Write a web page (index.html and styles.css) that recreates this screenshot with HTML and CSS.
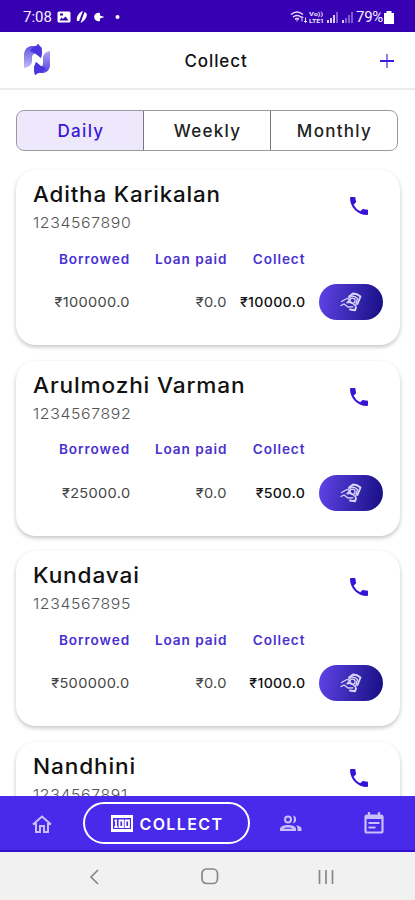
FILE: index.html
```html
<!DOCTYPE html>
<html lang="en">
<head>
<meta charset="utf-8">
<title>Collect</title>
<link rel="stylesheet" href="styles.css">
</head>
<body>
<svg class="defs" width="0" height="0">
  <symbol id="phone" viewBox="0 0 24 24"><path d="M20 15.5c-1.25 0-2.45-.2-3.57-.57a1 1 0 0 0-1.02.24l-2.2 2.2a15.05 15.05 0 0 1-6.59-6.58l2.2-2.21a1 1 0 0 0 .25-1.02A11.4 11.4 0 0 1 8.5 4a1 1 0 0 0-1-1H4a1 1 0 0 0-1 1c0 9.39 7.61 17 17 17a1 1 0 0 0 1-1v-3.5a1 1 0 0 0-1-1z"/></symbol>
  <symbol id="cash" viewBox="0 0 22 20"><g fill="none" stroke="#dcd8fa" stroke-width="1.3" stroke-linecap="round" stroke-linejoin="round"><path stroke-width="1.8" d="M9 4.500 13 1.500q4 0 7.500 3L17.500 12"/><path d="M8 6.500 12 4q3 0 5.500 2.500L15.500 14"/><circle cx="12.500" cy="8.800" r="2.600"/><path d="M1.500 9.500 7 6.500M7 6.500l3 1-3 3.300 4-.8 4 3.500M1 13.500l3-1.500 4 3 5-.2"/><path stroke-width="2" d="M10 17.500l5 .8 1-3"/></g></symbol>
</svg>
<div class="screen">
  <div class="status">
    <span class="time">7:08</span>
    <svg class="notes" width="68" height="16" viewBox="0 0 68 16" fill="#fff"><path fill-rule="evenodd" d="M2 2.5h10q1.500 0 1.500 1.500v8q0 1.500-1.500 1.500H2Q.5 13.500.5 12V4Q.5 2.500 2 2.500zM2.500 11.500h9L8.500 7.500 6 10 4.500 8.500zM3 4.500v2h3v-2z"/><path d="M20 12c-1-4 2-9 6-10l-4 10zM23.500 14l4-11c5 1 1 9-4 11z"/><path d="M43 4a4.300 4.300 0 1 0 0 8V9.500l4.500-1.500L43 6.500z"/><circle cx="60.500" cy="8" r="2"/></svg>
    <svg class="signals" width="66" height="16" viewBox="0 0 66 16" fill="none" stroke="#e8e0ff"><path stroke-width="1.500" d="M1 5.500q6-5 12 0M3 8q4-3 8 0M5 10.300q2-1.500 4 0"/><path d="M7 10.500v2M12 7.500v5m-1.500-3.500L12 7.500 13.500 9M15.500 8.500v5m-1.500-1.500 1.500 1.500 1.500-1.500"/><text x="19" y="7" class="tiny" textLength="14" lengthAdjust="spacingAndGlyphs">Vo))</text><text x="19" y="14" class="tiny" textLength="15" lengthAdjust="spacingAndGlyphs">LTE1</text><path stroke-width="1.800" d="M38 14v-3M41 14V9M44 14V6M53 14v-3"/><path stroke-width="1.800" opacity=".45" d="M47 14V3M56 14V9M59 14V6M62 14V3"/></svg>
    <span class="percent">79%</span>
    <svg class="battery" width="10" height="13" viewBox="0 0 10 13" fill="#fff"><path d="M2.500 0h5v2H10v11H0V2h2.500z"/></svg>
  </div>
  <header class="topbar">
    <svg class="logo" width="30" height="34" viewBox="0 0 30 34">
      <defs><linearGradient id="la" x2="0" y2="1"><stop stop-color="#5548dc"/><stop offset="1" stop-color="#c4bcf7"/></linearGradient><linearGradient id="lb" x2="0" y2="1"><stop stop-color="#b0a7f4"/><stop offset="1" stop-color="#4b36dc"/></linearGradient></defs>
      <path fill="url(#la)" d="M2 25V11Q3 4 9 3h6l1-2 4 4v4l-1 6-5-4q-3-1-4 3v5q-1 5-8 6z"/>
      <path fill="url(#lb)" d="M28 8v15q-1 6-7 7h-5l-3 2-1-4v-3l2-6 4 4q3 1 3-3v-6q1-5 7-6z"/>
      <path fill="#4935dc" d="m14 3 2-2 3 4 1 5-1 5-5-4-6-3q2-4 6-5zM12 24l2-5 5 4 5 2q-2 4-8 5l-3 2z"/>
    </svg>
    <h1>Collect</h1>
    <svg class="plus" width="14" height="14" viewBox="0 0 14 14"><path d="M7 0v14" stroke="#8c7eec" stroke-width="2"/><path d="M0 7h14" stroke="#3a1ae0" stroke-width="2"/></svg>
  </header>
  <main>
    <nav class="tabs"><span class="tab active">Daily</span><span class="tab">Weekly</span><span class="tab">Monthly</span></nav>
    <section class="card">
      <h2 class="long">Aditha Karikalan</h2><p>1234567890</p><svg class="phone"><use href="#phone"/></svg>
      <div class="grid"><b>Borrowed</b><b>Loan paid</b><b>Collect</b><i></i><span>₹100000.0</span><span>₹0.0</span><span class="due">₹10000.0</span><button><svg width="22" height="20"><use href="#cash"/></svg></button></div>
    </section>
    <section class="card">
      <h2>Arulmozhi Varman</h2><p>1234567892</p><svg class="phone"><use href="#phone"/></svg>
      <div class="grid"><b>Borrowed</b><b>Loan paid</b><b>Collect</b><i></i><span>₹25000.0</span><span>₹0.0</span><span class="due">₹500.0</span><button><svg width="22" height="20"><use href="#cash"/></svg></button></div>
    </section>
    <section class="card">
      <h2>Kundavai</h2><p>1234567895</p><svg class="phone"><use href="#phone"/></svg>
      <div class="grid"><b>Borrowed</b><b>Loan paid</b><b>Collect</b><i></i><span>₹500000.0</span><span>₹0.0</span><span class="due">₹1000.0</span><button><svg width="22" height="20"><use href="#cash"/></svg></button></div>
    </section>
    <section class="card">
      <h2>Nandhini</h2><p>1234567891</p><svg class="phone"><use href="#phone"/></svg>
    </section>
  </main>
  <nav class="bottom">
    <svg class="home" width="20" height="18" viewBox="0 0 20 18" fill="none" stroke="#c9c0fb" stroke-width="2"><path d="M1 9.500 10 1.500l9 8M4 8v9h4v-6h4v6h4V8"/></svg>
    <div class="pill"><svg width="22" height="17" viewBox="0 0 22 17"><path fill="#fff" fill-rule="evenodd" d="M0 0h22v17H0zM2 3v11h18V3z"/><path fill="none" stroke="#fff" stroke-width="1.800" d="M3.500 5.500H5V12M3.300 12h3.400M8.500 5.500H12V12H8.500zM14.500 5.500H18V12h-3.500z"/></svg><span>COLLECT</span></div>
    <svg class="people" width="22" height="17" viewBox="0 0 22 17" fill="#c9c0fb"><path fill-rule="evenodd" d="M8 .5a4 4 0 1 1 0 8 4 4 0 0 1 0-8zm0 2a2 2 0 1 0 0 4 2 2 0 0 0 0-4zM0 16v-2.500q1-3.500 8-3.500t8 3.500V16zM3.500 13.800h9q-1-1.300-4.500-1.300t-4.500 1.300z"/><path d="M13 .6a4 4 0 0 1 0 7.800q2-4 0-7.800zM16 10.300q5 .7 5.500 3.200V16h-4v-2.500q0-2-1.500-3.200z"/></svg>
    <svg class="calendar" width="20" height="22" viewBox="0 0 20 22" fill="none" stroke="#c9c0fb"><rect x="1.500" y="3.500" width="17" height="17" rx="1.500" stroke-width="2.200"/><path stroke-width="2.200" d="M5 0v4M15 0v4"/><path stroke-width="3" d="M2 5.500h16"/><path stroke-width="1.800" d="M4.500 11h11M4.500 15.500h7"/></svg>
  </nav>
  <footer class="system">
    <svg width="10" height="16" viewBox="0 0 10 16"><path d="M9 1 2 8l7 7"/></svg>
    <svg width="18" height="17" viewBox="0 0 18 17"><rect x="1" y="1" width="15.500" height="14.500" rx="4.500"/></svg>
    <svg width="16" height="16" viewBox="0 0 16 16"><path d="M1.500 1v14M8 1v14M14.500 1v14"/></svg>
  </footer>
</div>
</body>
</html>
```
FILE: styles.css
```css
* { box-sizing: border-box; margin: 0; padding: 0; }
body { font-family: Inter, "Noto Sans", sans-serif; background: #fff; }
.defs { position: absolute; }
svg { display: block; flex: none; }
.screen { width: 415px; height: 900px; display: flex; flex-direction: column; overflow: hidden; }
.status { height: 32px; flex: none; background: #3700b3; color: #f4f0ff; display: flex; align-items: center; padding: 3px 21px 0 23px; font: 15px/1 Roboto, sans-serif; border-bottom: 1px solid #2b00a8; }
.time { width: 34px; }
.signals { margin-left: auto; }
.tiny { font: bold 6px Roboto, sans-serif; fill: #e8e0ff; stroke: none; }
.percent { margin-left: 0; letter-spacing: -0.3px; }
.battery { margin-left: 1px; }
.topbar { height: 58px; flex: none; display: grid; grid-template-columns: 60px 1fr 60px; align-items: center; border-bottom: 2px solid #ececec; }
.logo { margin-left: 22px; }
h1 { text-align: center; font-size: 17px; font-weight: 500; letter-spacing: 0.9px; padding: 2px 0 0 17px; color: #111; }
.plus { margin-left: 25px; margin-top: 2px; }
main { flex: 1; min-height: 0; overflow: hidden; padding: 20px 15px 0 16px; }
.tabs { display: grid; grid-template-columns: 126px 127px 127px; height: 41px; width: 382px; border: 1px solid #999; border-radius: 8px; overflow: hidden; }
.tab { display: flex; align-items: center; justify-content: center; font-size: 17px; font-weight: 500; letter-spacing: 1.3px; color: #222; padding: 1px 0 0 1px; }
.tab + .tab { border-left: 1px solid #777; }
.tab.active { background: #eee8fd; color: #3819d6; border: 1px solid #9585e2; border-right: 0; border-radius: 8px 0 0 8px; margin: -1px 0 -1px -1px; padding-left: 2px; }
.card { position: relative; width: 384px; height: 175px; margin: 19px 0 15.500px; border-radius: 20px; box-shadow: 0 2px 4px rgba(0,0,0,.24); padding: 11.400px 17px 0; }
.card + .card { margin-top: 0; }
h2 { font-size: 21px; line-height: 28px; font-weight: 500; color: #111; white-space: nowrap; letter-spacing: 0.8px; transform: scaleX(1.077); transform-origin: left; }
h2.long { transform: scaleX(1.063); }
.card p { font-size: 15px; line-height: 20px; margin-top: 4px; font-weight: 300; color: #555; letter-spacing: 0.6px; transform: scaleX(1.055); transform-origin: left; }
.phone { position: absolute; left: 331px; top: 24px; width: 24px; height: 24px; fill: #3713d5; }
.grid { display: grid; grid-template-columns: 97px 97px 78px 78px; grid-template-rows: 20px 67px; margin-top: 15.300px; justify-items: end; align-items: center; }
.grid b { font-size: 13px; font-weight: 600; color: #4a30d0; letter-spacing: 0.9px; transform: scaleX(1.045); transform-origin: right; }
.grid span { font-size: 13.500px; color: #444; letter-spacing: 0.3px; transform: scaleX(1.08); transform-origin: right; }
.grid .due { color: #111; font-weight: 500; transform: scaleX(1.05); }
.grid button { width: 64px; height: 36px; border: 0; border-radius: 18px; background: linear-gradient(100deg, #6044e8, #160e82); display: grid; place-items: center; }
.bottom { height: 56px; flex: none; background: #4929ea; border-bottom: 2px solid #3510ca; display: grid; grid-template-columns: 83px 167px 83px 82px; align-items: center; justify-items: center; }
.home { margin-top: 2px; }
.people { margin-right: 2px; }
.pill { width: 167px; height: 42px; border: 2px solid #fff; border-radius: 21px; color: #fff; display: flex; align-items: center; justify-content: center; gap: 6px; font-size: 16px; font-weight: 600; letter-spacing: 1.400px; padding: 1px 0 0 2px; }
.system { height: 48px; flex: none; background: #f1f1f1; display: grid; grid-template-columns: 152px 70px 155px; align-items: center; justify-items: center; padding-top: 1px; }
.system svg { fill: none; stroke: #888; stroke-width: 1.700; }
.system svg:first-child { margin-left: 35px; }
.system svg:nth-child(2) { margin-left: 45px; }
.system svg:last-child { margin-left: 52px; }
```
